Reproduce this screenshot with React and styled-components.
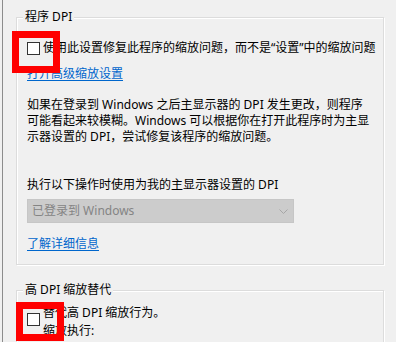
import React from "react";
import styled, { createGlobalStyle } from "styled-components";

const Global = createGlobalStyle`
  html, body { margin: 0; padding: 0; background: #f0f0f0; }
  body {
    width: 396px; height: 342px; overflow: hidden;
    font-family: "Noto Sans", "Noto Sans CJK SC", sans-serif;
    font-size: 12px; color: #000;
  }
`;

const Page = styled.div`
  padding-left: 2px;
`;

const Frame = styled.div`
  border-left: 1px solid #8c8c8c;
  padding: 9px 0 0 13px;
  height: 342px;
  overflow: hidden;
  box-sizing: border-box;
`;

const Group = styled.fieldset`
  margin: ${(p) => p.$top}px 0 0 0;
  width: 368px;
  box-sizing: border-box;
  border: 1px solid #dcdcdc;
  box-shadow: inset 1px 1px 0 #fff, 1px 1px 0 #fff;
  padding: 0 10px ${(p) => p.$bottom}px 10px;
  min-width: 0;
`;

const Legend = styled.legend`
  padding: 0 2px;
  margin-left: -4px;
  line-height: 16px;
  background: #f0f0f0;
`;

const Row = styled.div`
  display: flex;
  align-items: ${(p) => (p.$multi ? "flex-start" : "center")};
  gap: 3px;
  margin-top: ${(p) => p.$top}px;
`;

const Box = styled.span`
  position: relative;
  flex-shrink: 0;
  width: 13px;
  height: 13px;
  box-sizing: border-box;
  border: 1px solid #333;
  background: #fff;
  margin-top: ${(p) => p.$offset || 0}px;
`;

const Highlight = styled.span`
  position: absolute;
  left: ${(p) => p.$l}px;
  top: ${(p) => p.$t}px;
  width: ${(p) => p.$w}px;
  height: ${(p) => p.$h}px;
  box-sizing: border-box;
  border: 7px solid #ff0000;
  z-index: 2;
  pointer-events: none;
`;

const Label = styled.span`
  line-height: ${(p) => p.$lh || 16}px;
  white-space: nowrap;
`;

const Link = styled.a`
  display: block;
  width: max-content;
  margin-top: ${(p) => p.$top}px;
  line-height: 16px;
  color: #0066cc;
  text-decoration: underline;
  text-underline-offset: 2px;
`;

const Para = styled.p`
  margin: ${(p) => p.$top}px 0 0 0;
  line-height: 16px;
  white-space: nowrap;
`;

const Select = styled.div`
  margin-top: ${(p) => p.$top}px;
  width: 267px;
  height: 24px;
  box-sizing: border-box;
  background: #cccccc;
  border: 1px solid #c6c6c6;
  display: flex;
  align-items: center;
  justify-content: space-between;
  padding: 0 5px 0 4px;
  color: #848484;
  line-height: 16px;
`;

const Chevron = () => (
  <svg width="9" height="5" viewBox="0 0 9 5">
    <path d="M0.5 0.5 L4.5 4.5 L8.5 0.5" fill="none" stroke="#a6a6a6" strokeWidth="1" />
  </svg>
);

export default function App() {
  return (
    <Page>
      <Global />
      <Frame>
        <Group $top={0} $bottom={12}>
          <Legend>程序 DPI</Legend>
          <Row $top={15}>
            <Box>
              <Highlight $l={-16} $t={-12} $w={48} $h={42} />
            </Box>
            <Label>使用此设置修复此程序的缩放问题，而不是“设置”中的缩放问题</Label>
          </Row>
          <Link $top={10}>打开高级缩放设置</Link>
          <Para $top={15}>
            如果在登录到 Windows 之后主显示器的 DPI 发生更改，则程序
            <br />
            可能看起来较模糊。Windows 可以根据你在打开此程序时为主显
            <br />
            示器设置的 DPI，尝试修复该程序的缩放问题。
          </Para>
          <Para $top={32}>执行以下操作时使用为我的主显示器设置的 DPI</Para>
          <Select $top={6}>
            <span>已登录到 Windows</span>
            <Chevron />
          </Select>
          <Link $top={13}>了解详细信息</Link>
        </Group>
        <Group $top={17} $bottom={4}>
          <Legend>高 DPI 缩放替代</Legend>
          <Row $top={6} $multi>
            <Box $offset={9}>
              <Highlight $l={-12} $t={-12} $w={48} $h={39} />
            </Box>
            <Label $lh={17.5}>
              替代高 DPI 缩放行为。
              <br />
              缩放执行:
            </Label>
          </Row>
        </Group>
      </Frame>
    </Page>
  );
}
